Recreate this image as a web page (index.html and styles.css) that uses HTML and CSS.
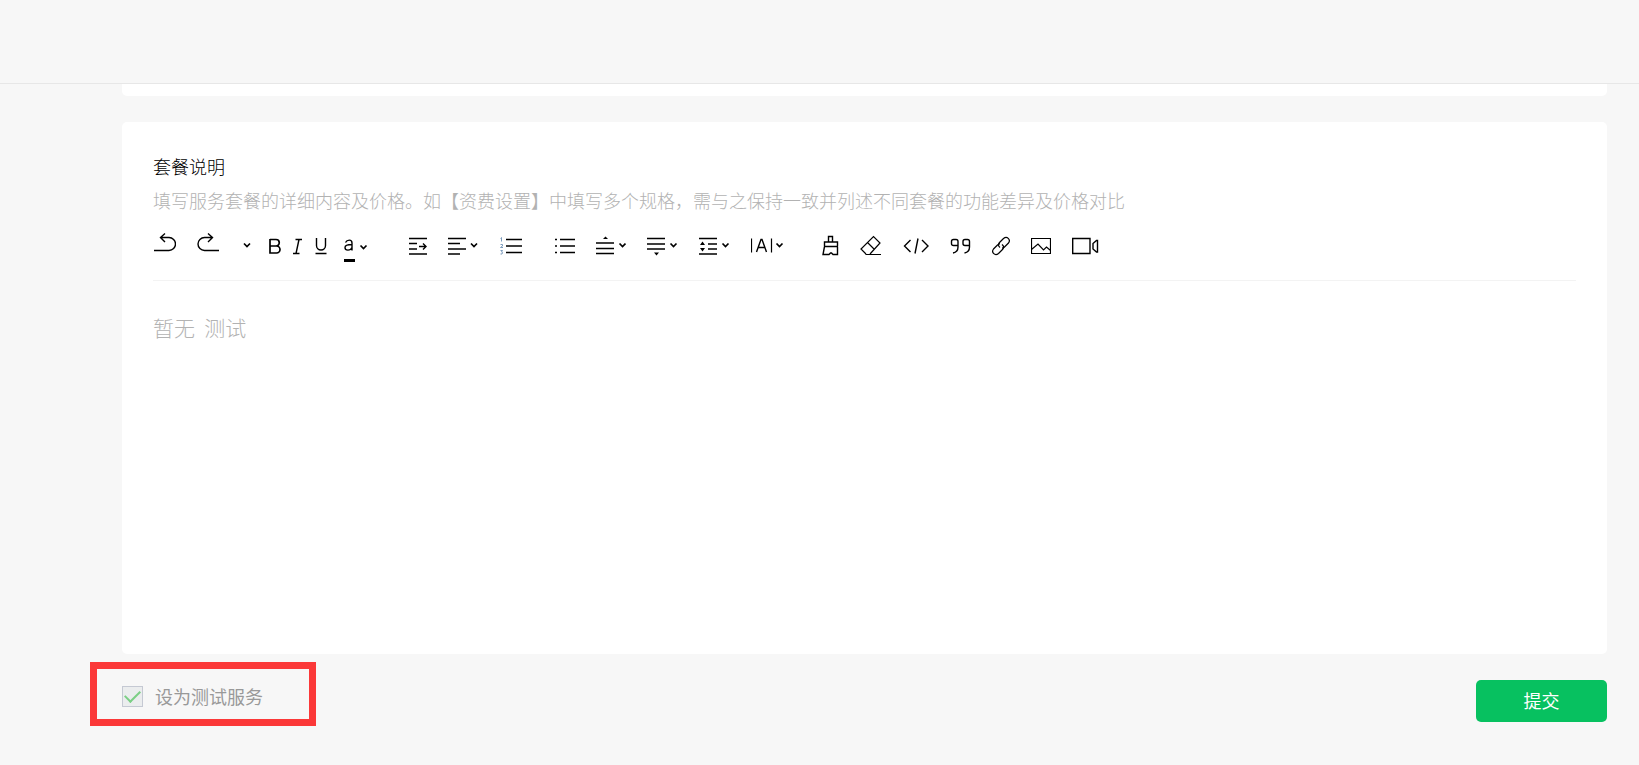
FILE: index.html
```html
<!DOCTYPE html>
<html lang="zh-CN">
	<head>
		<meta charset="utf-8">
		<title>套餐说明</title>
		<meta name="viewport" content="width=device-width, initial-scale=1.0">
		<link rel="stylesheet" href="styles.css">
	</head>
	<body>
		<header class="header"></header>
		<main class="main">
			<div class="card card-prev"></div>
			<section class="card card-editor">
				<label class="title" for="desc">套餐说明</label>
				<p class="tips">填写服务套餐的详细内容及价格。如【资费设置】中填写多个规格，需与之保持一致并列述不同套餐的功能差异及价格对比</p>
				<div class="toolbar">
					<div class="group group-history">
						<button type="button" aria-label="撤销"><svg width="23" height="30"><path d="M1 18.5h15a6.500 6.500 0 0 0 0-13H7.500M12 1.500l-4.500 4 4.500 4.500"/></svg></button>
						<button type="button" aria-label="重做"><svg width="22" height="30"><path d="M22 18.500H7.500a6.500 6.500 0 0 1 0-13H15.500M11 1.500l4.500 4-4.500 4.500"/></svg></button>
						<button type="button" aria-label="字号"><svg width="14" height="30"><path class="arrow" d="M4 11.500l3 3 3-3"/></svg></button>
					</div>
					<div class="group group-format">
						<button type="button" aria-label="加粗"><svg width="12" height="30"><path class="bold" d="M1 7.500h6a3.200 3.200 0 0 1 0 6.500H1M7 14h.5a3.500 3.500 0 0 1 0 7H1V7"/></svg></button>
						<button type="button" aria-label="斜体"><svg width="9" height="30"><path d="M2.500 7.500H9M0 21.500h6.500M6 7.500l-3 14"/></svg></button>
						<button type="button" aria-label="下划线"><svg width="13" height="30"><path d="M2.500 6v7.500a4.500 4.500 0 0 0 9 0V6M1.500 21.500h11"/></svg></button>
						<button type="button" aria-label="字体颜色"><svg width="37" height="30"><path d="M6.500 10.500C8 7.500 13 7 13 11v7.500M13 12.500C8 12.500 6 13.500 6 15.500c0 3.500 5.500 3.500 7 0"/><path class="fill" d="M5 27h11v3H5z"/><path class="arrow" d="M21.500 13.500l3 3 3-3"/></svg></button>
					</div>
					<div class="group">
						<button type="button" aria-label="缩进"><svg width="18" height="30"><path d="M0 6.500h18M0 11.500h8M0 17h8M0 22h18M10 14.500h7M14 11.500l3 3-3 3"/></svg></button>
						<button type="button" aria-label="对齐"><svg width="31" height="30"><path d="M0 6.500h18M0 11.500h12M0 17h18M0 22h12"/><path class="arrow" d="M23 11.500l3 3 3-3"/></svg></button>
						<button type="button" aria-label="有序列表"><svg width="22" height="30"><path d="M6 7.500H22M6 14H22M6 20.500H22"/><path class="num" d="M.5 6.500l1-1v4M.5 12.500h2v1.500l-2 1.500h2.500M.5 18.500h2l-1 1.500 1 .5-.5 1.500H.5"/></svg></button>
					</div>
					<div class="group">
						<button type="button" aria-label="无序列表"><svg width="20" height="30"><path d="M5 7.500h15M5 14h15M5 20.500h15M0 7.500h2M0 14h2M0 20.500h2"/></svg></button>
						<button type="button" aria-label="段前距"><svg width="30" height="30"><path d="M0 11h18M0 16.500h18M0 21.500h18"/><path class="fill" d="M7 7l2.500-2.500L12 7z"/><path class="arrow" d="M23.500 11.500l3 3 3-3"/></svg></button>
						<button type="button" aria-label="段后距"><svg width="31" height="30"><path d="M0 6.500h18M0 12h18M0 17h18"/><path class="fill" d="M7 20.500h5l-2.500 3z"/><path class="arrow" d="M23.500 11.500l3 3 3-3"/></svg></button>
						<button type="button" aria-label="行高"><svg width="31" height="30"><path d="M0 6.500h18M9 12h9M9 17h9M0 22h18"/><path class="fill" d="M1 13l2.500-3.500L6 13zM1 16h5l-2.500 3.500z"/><path class="arrow" d="M23.500 11.500l3 3 3-3"/></svg></button>
						<button type="button" aria-label="字间距"><svg width="38" height="30"><path class="thin" d="M.5 6.500v14M20.500 6.500v14"/><path d="M5.500 20L10 7.500h1L15.500 20M7 15.500h7"/><path class="arrow" d="M25.500 11.500l3 3 3-3"/></svg></button>
					</div>
					<div class="group">
						<button type="button" aria-label="格式刷"><svg width="17" height="30"><path d="M6.500 10V4.500h4V10M2.500 14V10h13v4M2 14.500h14M2.500 14.500l-1.500 8h6l1.500-1.500h1l1.500 1.500h4.500v-8"/></svg></button>
						<button type="button" aria-label="清除格式"><svg width="22" height="30"><path class="thin" d="M6 22L1 17 13.500 4.500l6.500 6.500L10 22M7.500 10.500l7 7M5.500 22.500H21"/></svg></button>
						<button type="button" aria-label="代码"><svg width="26" height="30"><path d="M7.500 8L1.500 14l6 6M19 8l6 6-6 6M15 6.500l-3 15"/></svg></button>
						<button type="button" aria-label="引用"><svg width="21" height="30"><path d="M8 13.500H3.500Q1.500 13.500 1.500 11.500V9.500Q1.500 7.500 3.500 7.500h2.500Q8 7.500 8 9.500v5.500q0 5-5 6M19.500 13.500H15q-2 0-2-2V9.500q0-2 2-2h2.500q2 0 2 2v5.500q0 5-5 6"/></svg></button>
						<button type="button" aria-label="链接"><svg width="18" height="30"><path class="thin" d="M8 15.500c-2-1.500-2-3.500-.5-5l4-4c3.500-3 7.500 1 5 4.500l-4 4c-.8.800-1.500 1-2.500 1M10 12.500c2 1.500 2 3.500.5 5l-4 4c-3.500 3-7.500-1-5-4.500l4-4c.8-.8 1.500-1 2.500-1"/></svg></button>
						<button type="button" aria-label="图片"><svg width="20" height="30"><path class="thin" d="M.5 6.500h19v15H.5zM.5 17.500l6.500-5.500 5.500 6 3-3 4 3.500"/></svg></button>
						<button type="button" aria-label="视频"><svg width="27" height="30"><path d="M.7 6.500H18v15H.7zM25.500 8.500v11.500h-1l-3.500-3v-5.500l3.500-3z"/></svg></button>
					</div>
				</div>
				<textarea id="desc" class="content" placeholder="暂无  测试"></textarea>
			</section>
			<footer class="footer">
				<label class="test-service">
					<input type="checkbox" class="check" checked disabled>
					<span>设为测试服务</span>
				</label>
				<button type="submit" class="btn-submit">提交</button>
			</footer>
		</main>
	</body>
</html>
```
FILE: styles.css
```css
* {
	box-sizing: border-box;
}
body {
	margin: 0;
	min-height: 100vh;
	display: flex;
	flex-direction: column;
	background-color: #f7f7f7;
	color: #000;
	font-family: "Noto Sans CJK SC", sans-serif;
	font-size: 18px;
	font-weight: 300;
	line-height: 26px;
}
button,
textarea {
	font: inherit;
	border: 0;
	padding: 0;
	background: none;
}
.header {
	height: 84px;
	border-bottom: 1px solid #e7e7e7;
}
.main {
	flex: 1;
	display: flex;
	flex-direction: column;
	padding: 0 32px 0 122px;
}
.card {
	background-color: #fff;
	border-radius: 5px;
}
.card-prev {
	height: 12px;
	margin-bottom: 26px;
	border-radius: 0 0 5px 5px;
}
.card-editor {
	flex: 1;
	display: flex;
	flex-direction: column;
	padding: 31px;
}
.title {
	margin-bottom: 8px;
}
.tips {
	margin: 0;
	color: #b2b2b2;
}
.toolbar {
	display: flex;
	flex-wrap: wrap;
	gap: 33px;
	margin-top: 19px;
	padding-bottom: 18px;
	border-bottom: 1px solid #f3f3f3;
}
.group {
	display: flex;
	gap: 21px;
}
.group-history {
	margin-right: -18px;
}
.group-format {
	gap: 12px;
}
.toolbar button {
	display: block;
	cursor: pointer;
}
.toolbar svg {
	display: block;
	fill: none;
	stroke: #000;
	stroke-width: 1.4;
}
.toolbar .arrow,
.toolbar .bold {
	stroke-width: 1.7;
}
.toolbar .thin {
	stroke-width: 1.2;
}
.toolbar .fill {
	fill: #000;
	stroke: none;
}
.toolbar .num {
	stroke: #7d9cbd;
	stroke-width: 1;
}
.content {
	flex: 1;
	margin-top: 30px;
	outline: none;
	resize: none;
	font-size: 21px;
	line-height: 32px;
}
.content::placeholder {
	color: #b2b2b2;
}
.footer {
	display: flex;
	justify-content: space-between;
	align-items: flex-start;
	padding: 8px 0 39px;
}
/* pulled out so the tick box lines up with the cards */
.test-service {
	display: flex;
	align-items: center;
	gap: 12px;
	height: 64px;
	margin-left: -32px;
	padding: 4px 46px 0 25px;
	border: 7px solid #fb3838;
	color: #999;
	font-weight: 400;
}
.check {
	appearance: none;
	display: grid;
	place-items: center;
	width: 21px;
	height: 21px;
	margin: 0;
	border: 1px solid #c5c9d3;
	background-color: #ebedee;
}
.check:checked::before {
	content: "";
	width: 13px;
	height: 7px;
	margin-bottom: 3px;
	border: solid #7bcf85;
	border-width: 0 0 2px 2px;
	transform: rotate(-45deg);
}
.btn-submit {
	width: 131px;
	height: 42px;
	margin-top: 18px;
	padding-bottom: 2px;
	border-radius: 5px;
	background-color: #07c160;
	color: #fff;
	font-weight: 400;
	cursor: pointer;
}
```
